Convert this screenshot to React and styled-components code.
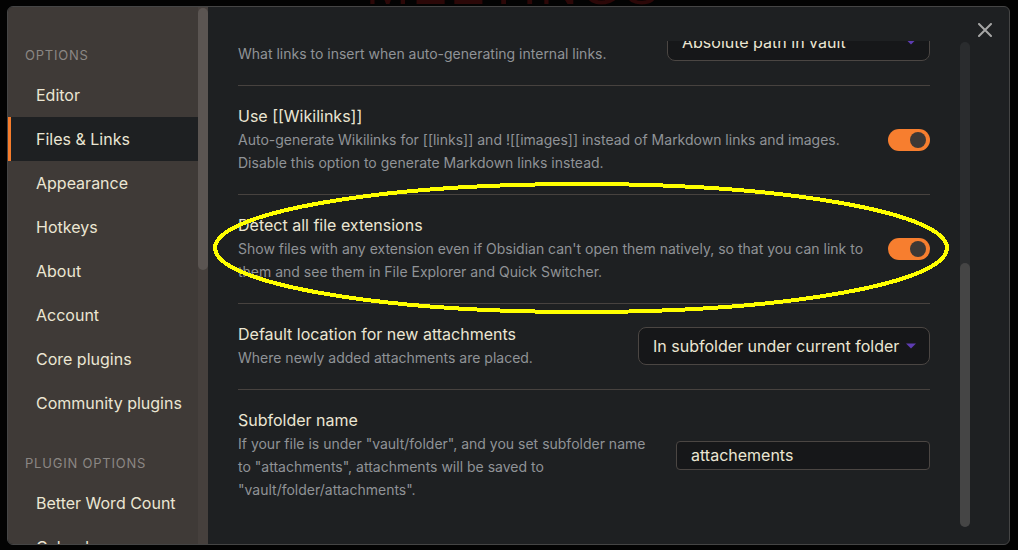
import React from "react";
import styled, { createGlobalStyle } from "styled-components";

const GlobalStyle = createGlobalStyle`
  html, body {
    margin: 0;
    padding: 0;
    background: #000;
  }
  body {
    width: 1018px;
    height: 550px;
    overflow: hidden;
    font-family: Inter, "Noto Sans", sans-serif;
  }
  #root {
    position: relative;
    width: 1018px;
    height: 550px;
  }
`;

const Backdrop = styled.div`
  height: 100%;
  background: #030303;
  overflow: hidden;
`;

const BackdropTitle = styled.div`
  margin: -44px 0 0 366px;
  font: 400 52px "Liberation Sans", sans-serif;
  letter-spacing: 3px;
  color: #2c0808;
`;

const Modal = styled.div`
  position: absolute;
  left: 7px;
  top: 6px;
  width: 1001px;
  height: 537px;
  border: 1px solid #454545;
  border-radius: 6px;
  background: #1e2022;
  display: flex;
  overflow: hidden;
`;

const Sidebar = styled.nav`
  width: 190px;
  flex-shrink: 0;
  padding-top: 10px;
  box-sizing: border-box;
  background: #3f3a37;
  overflow: hidden;
`;

const SideHeader = styled.div`
  margin: 28px 0 8px;
  padding-left: 17px;
  font-size: 13px;
  line-height: 20px;
  letter-spacing: 0.06em;
  text-transform: uppercase;
  color: #8b8784;
`;

const SideItem = styled.div`
  height: 44px;
  display: flex;
  align-items: center;
  padding-left: 28px;
  font-size: 16px;
  color: #ebe6d3;
  background: ${(p) => (p.$active ? "#1e2022" : "transparent")};
  box-shadow: ${(p) => (p.$active ? "inset 3px 0 0 #f57c2c" : "none")};
`;

const SideScroll = styled.div`
  width: 10px;
  flex-shrink: 0;
  padding-top: 1px;
  background: #46403d;
`;

const SideThumb = styled.div`
  height: 262px;
  border-radius: 5px;
  background: #5b5552;
`;

const Content = styled.div`
  flex: 1;
  min-width: 0;
  display: flex;
  padding-top: 34px;
  box-sizing: border-box;
`;

const ScrollArea = styled.div`
  flex: 1;
  min-width: 0;
  padding: 0 30px;
  overflow: hidden;
`;

const ScrollInner = styled.div`
  margin-top: -41px;
`;

const Scrollbar = styled.div`
  width: 10px;
  flex-shrink: 0;
  margin: 1px 39px 17px 0;
  border-radius: 5px;
  background: #2a2c2e;
  display: flex;
  flex-direction: column;
`;

const ScrollThumb = styled.div`
  margin-top: auto;
  height: 264px;
  border-radius: 5px;
  background: #454545;
`;

const Setting = styled.div`
  display: flex;
  align-items: center;
  padding: 19px 0 20px;
  border-top: 1px solid #47423f;

  &:first-child {
    border-top: none;
  }
`;

const Info = styled.div`
  flex: 1;
  min-width: 0;
  margin-right: 20px;
`;

const Title = styled.div`
  font-size: 16px;
  line-height: 22px;
  color: #ebe6d3;
`;

const Desc = styled.div`
  margin-top: 1px;
  font-size: 14px;
  line-height: 23px;
  color: #909397;
`;

const Dropdown = styled.div`
  width: ${(p) => p.$width}px;
  height: 38px;
  flex-shrink: 0;
  box-sizing: border-box;
  display: flex;
  align-items: center;
  justify-content: space-between;
  padding: 0 13px 0 14px;
  border: 1px solid #4b4643;
  border-radius: 8px;
  background: #161719;
  font-size: 16px;
  color: #ebe6d3;
`;

const TextInput = styled.input`
  width: 254px;
  height: 29px;
  flex-shrink: 0;
  box-sizing: border-box;
  padding: 0 14px;
  border: 1px solid #4b4643;
  border-radius: 4px;
  background: #161719;
  outline: none;
  font: 16px Inter, "Noto Sans", sans-serif;
  color: #ebe6d3;
`;

const Toggle = styled.div`
  position: relative;
  width: 42px;
  height: 22px;
  flex-shrink: 0;
  border-radius: 11px;
  background: #f77e2f;

  &::after {
    content: "";
    position: absolute;
    top: 3px;
    right: 4px;
    width: 16px;
    height: 16px;
    border-radius: 50%;
    background: #3e3835;
  }
`;

const CloseButton = styled.div`
  position: absolute;
  top: 16px;
  right: 17px;
  width: 14px;
  height: 14px;
  display: flex;
`;

const Annotation = styled.svg`
  position: absolute;
  left: 0;
  top: 0;
  pointer-events: none;
`;

const Caret = () => (
  <svg width="10" height="6" viewBox="0 0 10 6">
    <path d="M0 0.5 L10 0.5 L5 5.5 Z" fill="#5e3cb2" />
  </svg>
);

const sideItems = [
  "Editor",
  "Files & Links",
  "Appearance",
  "Hotkeys",
  "About",
  "Account",
  "Core plugins",
  "Community plugins",
];

const App = () => {
  return (
    <>
      <GlobalStyle />
      <Backdrop>
        <BackdropTitle>MEETINGS</BackdropTitle>
      </Backdrop>
      <Modal>
        <Sidebar>
          <SideHeader>Options</SideHeader>
          {sideItems.map((item) => (
            <SideItem key={item} $active={item === "Files & Links"}>
              {item}
            </SideItem>
          ))}
          <SideHeader>Plugin options</SideHeader>
          <SideItem>Better Word Count</SideItem>
          <SideItem>Calendar</SideItem>
        </Sidebar>
        <SideScroll>
          <SideThumb />
        </SideScroll>
        <Content>
          <ScrollArea>
            <ScrollInner>
              <Setting>
                <Info>
                  <Title>New link format</Title>
                  <Desc>What links to insert when auto-generating internal links.</Desc>
                </Info>
                <Dropdown $width={263}>
                  <span>Absolute path in vault</span>
                  <Caret />
                </Dropdown>
              </Setting>
              <Setting>
                <Info>
                  <Title>Use [[Wikilinks]]</Title>
                  <Desc>
                    Auto-generate Wikilinks for [[links]] and ![[images]] instead of Markdown links and images.
                    <br />
                    Disable this option to generate Markdown links instead.
                  </Desc>
                </Info>
                <Toggle />
              </Setting>
              <Setting>
                <Info>
                  <Title>Detect all file extensions</Title>
                  <Desc>
                    Show files with any extension even if Obsidian can't open them natively, so that you can link to
                    <br />
                    them and see them in File Explorer and Quick Switcher.
                  </Desc>
                </Info>
                <Toggle />
              </Setting>
              <Setting>
                <Info>
                  <Title>Default location for new attachments</Title>
                  <Desc>Where newly added attachments are placed.</Desc>
                </Info>
                <Dropdown $width={292}>
                  <span>In subfolder under current folder</span>
                  <Caret />
                </Dropdown>
              </Setting>
              <Setting>
                <Info>
                  <Title>Subfolder name</Title>
                  <Desc>
                    If your file is under "vault/folder", and you set subfolder name
                    <br />
                    to "attachments", attachments will be saved to
                    <br />
                    "vault/folder/attachments".
                  </Desc>
                </Info>
                <TextInput value="attachements" readOnly />
              </Setting>
            </ScrollInner>
          </ScrollArea>
          <Scrollbar>
            <ScrollThumb />
          </Scrollbar>
        </Content>
        <CloseButton>
          <svg width="14" height="14" viewBox="0 0 14 14">
            <path d="M1 1 L13 13 M13 1 L1 13" stroke="#a6a6a6" strokeWidth="2" strokeLinecap="round" />
          </svg>
        </CloseButton>
      </Modal>
      <Annotation width="1018" height="550" viewBox="0 0 1018 550">
        <ellipse
          cx="581"
          cy="248"
          rx="366"
          ry="64"
          fill="none"
          stroke="#ffff00"
          strokeWidth="4"
          shapeRendering="crispEdges"
        />
      </Annotation>
    </>
  );
};

export default App;
